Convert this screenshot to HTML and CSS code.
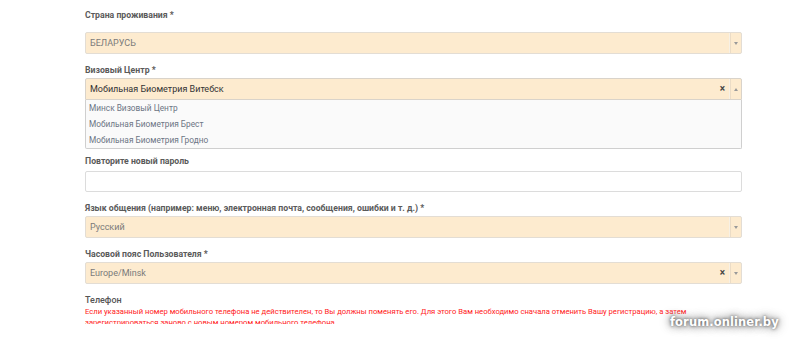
FILE: index.html
```html
<!DOCTYPE html>
<html lang="ru">
<head>
<meta charset="utf-8">
<link rel="stylesheet" href="styles.css">
</head>
<body>
<div class="form">
  <div class="field first">
    <div class="label">Страна проживания *</div>
    <div class="select">
      <span class="value muted">БЕЛАРУСЬ</span>
      <span class="arrow"><span class="tri down"></span></span>
    </div>
  </div>

  <div class="field open-field">
    <div class="label">Визовый Центр *</div>
    <div class="select open">
      <span class="value dark">Мобильная Биометрия Витебск</span>
      <span class="clear">×</span>
      <span class="arrow"><span class="tri up"></span></span>
    </div>
    <ul class="dropdown">
      <li>Минск Визовый Центр</li>
      <li>Мобильная Биометрия Брест</li>
      <li>Мобильная Биометрия Гродно</li>
    </ul>
  </div>

  <div class="field">
    <div class="label spaced">Повторите новый пароль</div>
    <div class="input"></div>
  </div>

  <div class="field">
    <div class="label">Язык общения (например: меню, электронная почта, сообщения, ошибки и т. д.) *</div>
    <div class="select">
      <span class="value muted">Русский</span>
      <span class="arrow"><span class="tri down"></span></span>
    </div>
  </div>

  <div class="field">
    <div class="label">Часовой пояс Пользователя *</div>
    <div class="select">
      <span class="value muted">Europe/Minsk</span>
      <span class="clear">×</span>
      <span class="arrow"><span class="tri down"></span></span>
    </div>
  </div>

  <div class="field phone">
    <div class="label light">Телефон</div>
    <div class="warn">Если указанный номер мобильного телефона не действителен, то Вы должны поменять его. Для этого Вам необходимо сначала отменить Вашу регистрацию, а затем зарегистрироваться заново с новым номером мобильного телефона.</div>
  </div>
</div>
<div class="watermark">forum.onliner.by</div>
</body>
</html>
```

FILE: styles.css
```css
html, body {
  margin: 0;
  padding: 0;
  background: #ffffff;
  width: 800px;
  height: 344px;
  overflow: hidden;
  font-family: Roboto, "Liberation Sans", Arial, sans-serif;
}

.form {
  width: 657px;
  margin-left: 85px;
  padding-top: 9px;
}

.field {
  margin-bottom: 10px;
}

.field.open-field {
  margin-bottom: 6px;
}

.label {
  font-size: 8.7px;
  line-height: 12px;
  font-weight: 700;
  color: #5a5a5a;
  margin-bottom: 2px;
}

.field.first .label {
  margin-bottom: 11px;
}

.label.spaced {
  margin-bottom: 4px;
}

.label.light {
  font-size: 9px;
  font-weight: 500;
  color: #555;
  margin-bottom: 0;
}

.select {
  box-sizing: border-box;
  height: 22px;
  background: #fdebcf;
  border: 1px solid #e3ddd4;
  border-radius: 2px;
  display: flex;
  align-items: center;
}

.select.open {
  border-color: #d9d3ca;
  border-bottom-left-radius: 0;
  border-bottom-right-radius: 0;
}

.value {
  flex: 1;
  font-size: 9px;
  padding-left: 4px;
  white-space: nowrap;
}

.value.muted { color: #7a7a7a; }
.value.dark { color: #333; }

.clear {
  font-size: 10px;
  font-weight: 700;
  color: #444;
  line-height: 1;
  margin-right: 5px;
}

.arrow {
  align-self: stretch;
  width: 10px;
  border-left: 1px solid #ebdcc6;
  box-shadow: -1px 0 0 #f7f0e4;
  display: flex;
  align-items: center;
  justify-content: center;
}

.tri {
  width: 0;
  height: 0;
  border-left: 2.5px solid transparent;
  border-right: 2.5px solid transparent;
}

.tri.down { border-top: 3px solid #999; }
.tri.up { border-bottom: 3px solid #999; }

.dropdown {
  list-style: none;
  margin: 0;
  padding: 0 0 2px;
  box-sizing: border-box;
  height: 49px;
  background: #fafafa;
  border: 1px solid #cfcfcf;
  border-top: none;
  border-radius: 0 0 2px 2px;
}

.dropdown li {
  font-size: 8.3px;
  line-height: 16px;
  color: #6c7584;
  padding-left: 3px;
}

.input {
  box-sizing: border-box;
  height: 21px;
  background: #fff;
  border: 1px solid #dcdcdc;
  border-radius: 2px;
}

.warn {
  font-size: 7.65px;
  line-height: 11px;
  color: #ff1a1a;
  height: 18px;
  overflow: hidden;
  width: 615px;
}

.watermark {
  position: absolute;
  left: 670px;
  top: 316px;
  line-height: 12px;
  font-family: "DejaVu Sans", sans-serif;
  font-weight: 700;
  font-size: 11.5px;
  color: #ffffff;
  letter-spacing: 0.1px;
  text-shadow: 0 0 3px #555, 0 0 7px #777, 0 0 12px #999;
}
```
